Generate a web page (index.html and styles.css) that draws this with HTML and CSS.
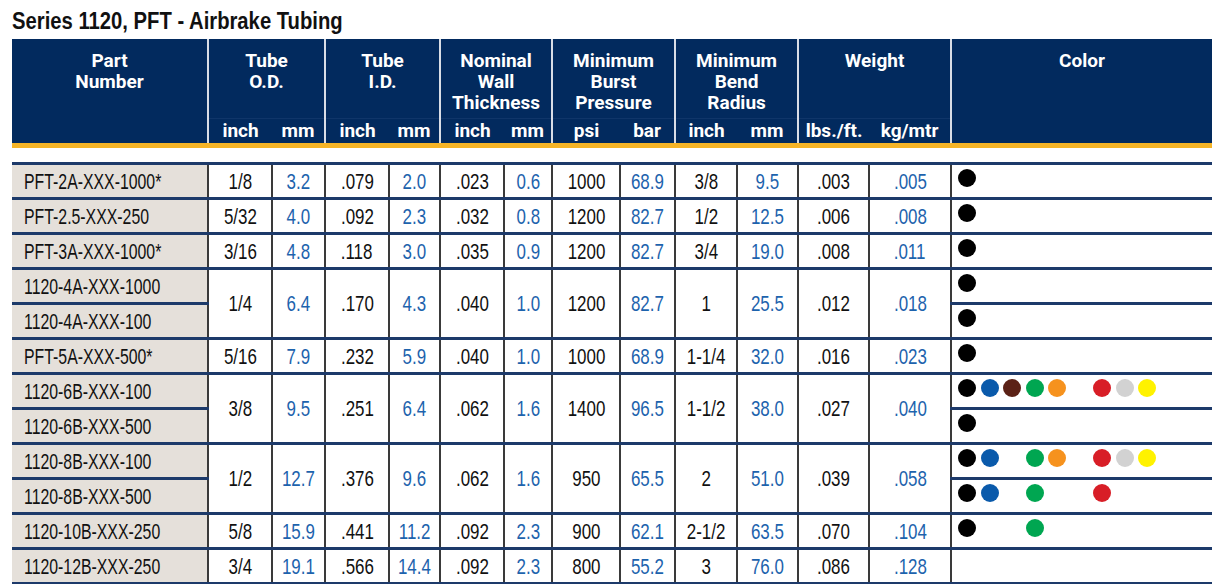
FILE: index.html
```html
<!DOCTYPE html>
<html lang="en">
<head>
<meta charset="utf-8">
<title>Series 1120, PFT - Airbrake Tubing</title>
<link rel="stylesheet" href="styles.css">
</head>
<body>
<h1 class="title"><span class="t">Series 1120, PFT - Airbrake Tubing</span></h1>
<table class="spec">
  <colgroup>
    <col style="width:196px"><col style="width:64px"><col style="width:53px"><col style="width:64px"><col style="width:51px"><col style="width:64px"><col style="width:48px"><col style="width:68px"><col style="width:55px"><col style="width:62px"><col style="width:61px"><col style="width:71px"><col style="width:82px"><col style="width:261px">
  </colgroup>
  <thead>
    <tr class="h1">
      <th rowspan="2" class="first">Part<br>Number</th>
      <th colspan="2" class="g">Tube<br>O.D.</th>
      <th colspan="2" class="g">Tube<br>I.D.</th>
      <th colspan="2" class="g">Nominal<br>Wall<br>Thickness</th>
      <th colspan="2" class="g">Minimum<br>Burst<br>Pressure</th>
      <th colspan="2" class="g">Minimum<br>Bend<br>Radius</th>
      <th colspan="2" class="g">Weight</th>
      <th rowspan="2" class="g">Color</th>
    </tr>
    <tr class="h2">
      <th class="g">inch</th><th>mm</th>
      <th class="g">inch</th><th>mm</th>
      <th class="g">inch</th><th>mm</th>
      <th class="g">psi</th><th>bar</th>
      <th class="g">inch</th><th>mm</th>
      <th class="g">lbs./ft.</th><th>kg/mtr</th>
    </tr>
  </thead>
  <tbody>
    <tr class="spacer"><td colspan="14"></td></tr>
    <tr>
      <td class="pn"><span class="t">PFT-2A-XXX-1000*</span></td><td><span class="t">1/8</span></td><td class="m"><span class="t">3.2</span></td><td><span class="t">.079</span></td><td class="m"><span class="t">2.0</span></td><td><span class="t">.023</span></td><td class="m"><span class="t">0.6</span></td><td><span class="t">1000</span></td><td class="m"><span class="t">68.9</span></td><td><span class="t">3/8</span></td><td class="m"><span class="t">9.5</span></td><td><span class="t">.003</span></td><td class="m"><span class="t">.005</span></td>
      <td class="clr"><div class="dots"><span class="dot k"></span></div></td>
    </tr>
    <tr>
      <td class="pn"><span class="t">PFT-2.5-XXX-250</span></td><td><span class="t">5/32</span></td><td class="m"><span class="t">4.0</span></td><td><span class="t">.092</span></td><td class="m"><span class="t">2.3</span></td><td><span class="t">.032</span></td><td class="m"><span class="t">0.8</span></td><td><span class="t">1200</span></td><td class="m"><span class="t">82.7</span></td><td><span class="t">1/2</span></td><td class="m"><span class="t">12.5</span></td><td><span class="t">.006</span></td><td class="m"><span class="t">.008</span></td>
      <td class="clr"><div class="dots"><span class="dot k"></span></div></td>
    </tr>
    <tr>
      <td class="pn"><span class="t">PFT-3A-XXX-1000*</span></td><td><span class="t">3/16</span></td><td class="m"><span class="t">4.8</span></td><td><span class="t">.118</span></td><td class="m"><span class="t">3.0</span></td><td><span class="t">.035</span></td><td class="m"><span class="t">0.9</span></td><td><span class="t">1200</span></td><td class="m"><span class="t">82.7</span></td><td><span class="t">3/4</span></td><td class="m"><span class="t">19.0</span></td><td><span class="t">.008</span></td><td class="m"><span class="t">.011</span></td>
      <td class="clr"><div class="dots"><span class="dot k"></span></div></td>
    </tr>
    <tr>
      <td class="pn"><span class="t">1120-4A-XXX-1000</span></td><td rowspan="2"><span class="t">1/4</span></td><td rowspan="2" class="m"><span class="t">6.4</span></td><td rowspan="2"><span class="t">.170</span></td><td rowspan="2" class="m"><span class="t">4.3</span></td><td rowspan="2"><span class="t">.040</span></td><td rowspan="2" class="m"><span class="t">1.0</span></td><td rowspan="2"><span class="t">1200</span></td><td rowspan="2" class="m"><span class="t">82.7</span></td><td rowspan="2"><span class="t">1</span></td><td rowspan="2" class="m"><span class="t">25.5</span></td><td rowspan="2"><span class="t">.012</span></td><td rowspan="2" class="m"><span class="t">.018</span></td>
      <td class="clr"><div class="dots"><span class="dot k"></span></div></td>
    </tr>
    <tr>
      <td class="pn"><span class="t">1120-4A-XXX-100</span></td>
      <td class="clr"><div class="dots"><span class="dot k"></span></div></td>
    </tr>
    <tr>
      <td class="pn"><span class="t">PFT-5A-XXX-500*</span></td><td><span class="t">5/16</span></td><td class="m"><span class="t">7.9</span></td><td><span class="t">.232</span></td><td class="m"><span class="t">5.9</span></td><td><span class="t">.040</span></td><td class="m"><span class="t">1.0</span></td><td><span class="t">1000</span></td><td class="m"><span class="t">68.9</span></td><td><span class="t">1-1/4</span></td><td class="m"><span class="t">32.0</span></td><td><span class="t">.016</span></td><td class="m"><span class="t">.023</span></td>
      <td class="clr"><div class="dots"><span class="dot k"></span></div></td>
    </tr>
    <tr>
      <td class="pn"><span class="t">1120-6B-XXX-100</span></td><td rowspan="2"><span class="t">3/8</span></td><td rowspan="2" class="m"><span class="t">9.5</span></td><td rowspan="2"><span class="t">.251</span></td><td rowspan="2" class="m"><span class="t">6.4</span></td><td rowspan="2"><span class="t">.062</span></td><td rowspan="2" class="m"><span class="t">1.6</span></td><td rowspan="2"><span class="t">1400</span></td><td rowspan="2" class="m"><span class="t">96.5</span></td><td rowspan="2"><span class="t">1-1/2</span></td><td rowspan="2" class="m"><span class="t">38.0</span></td><td rowspan="2"><span class="t">.027</span></td><td rowspan="2" class="m"><span class="t">.040</span></td>
      <td class="clr"><div class="dots"><span class="dot k"></span><span class="dot b"></span><span class="dot br"></span><span class="dot g"></span><span class="dot o"></span><span class="dot"></span><span class="dot r"></span><span class="dot gy"></span><span class="dot y"></span></div></td>
    </tr>
    <tr>
      <td class="pn"><span class="t">1120-6B-XXX-500</span></td>
      <td class="clr"><div class="dots"><span class="dot k"></span></div></td>
    </tr>
    <tr>
      <td class="pn"><span class="t">1120-8B-XXX-100</span></td><td rowspan="2"><span class="t">1/2</span></td><td rowspan="2" class="m"><span class="t">12.7</span></td><td rowspan="2"><span class="t">.376</span></td><td rowspan="2" class="m"><span class="t">9.6</span></td><td rowspan="2"><span class="t">.062</span></td><td rowspan="2" class="m"><span class="t">1.6</span></td><td rowspan="2"><span class="t">950</span></td><td rowspan="2" class="m"><span class="t">65.5</span></td><td rowspan="2"><span class="t">2</span></td><td rowspan="2" class="m"><span class="t">51.0</span></td><td rowspan="2"><span class="t">.039</span></td><td rowspan="2" class="m"><span class="t">.058</span></td>
      <td class="clr"><div class="dots"><span class="dot k"></span><span class="dot b"></span><span class="dot"></span><span class="dot g"></span><span class="dot o"></span><span class="dot"></span><span class="dot r"></span><span class="dot gy"></span><span class="dot y"></span></div></td>
    </tr>
    <tr>
      <td class="pn"><span class="t">1120-8B-XXX-500</span></td>
      <td class="clr"><div class="dots"><span class="dot k"></span><span class="dot b"></span><span class="dot"></span><span class="dot g"></span><span class="dot"></span><span class="dot"></span><span class="dot r"></span></div></td>
    </tr>
    <tr>
      <td class="pn"><span class="t">1120-10B-XXX-250</span></td><td><span class="t">5/8</span></td><td class="m"><span class="t">15.9</span></td><td><span class="t">.441</span></td><td class="m"><span class="t">11.2</span></td><td><span class="t">.092</span></td><td class="m"><span class="t">2.3</span></td><td><span class="t">900</span></td><td class="m"><span class="t">62.1</span></td><td><span class="t">2-1/2</span></td><td class="m"><span class="t">63.5</span></td><td><span class="t">.070</span></td><td class="m"><span class="t">.104</span></td>
      <td class="clr"><div class="dots"><span class="dot k"></span><span class="dot"></span><span class="dot"></span><span class="dot g"></span></div></td>
    </tr>
    <tr>
      <td class="pn"><span class="t">1120-12B-XXX-250</span></td><td><span class="t">3/4</span></td><td class="m"><span class="t">19.1</span></td><td><span class="t">.566</span></td><td class="m"><span class="t">14.4</span></td><td><span class="t">.092</span></td><td class="m"><span class="t">2.3</span></td><td><span class="t">800</span></td><td class="m"><span class="t">55.2</span></td><td><span class="t">3</span></td><td class="m"><span class="t">76.0</span></td><td><span class="t">.086</span></td><td class="m"><span class="t">.128</span></td>
      <td class="clr"><div class="dots"></div></td>
    </tr>
  </tbody>
</table>
</body>
</html>
```
FILE: styles.css
```css
html, body {
  margin: 0;
  padding: 0;
  background: #ffffff;
}

body {
  padding: 0 7px 0 12px;
  font-family: "Liberation Sans", Arial, sans-serif;
  color: #111111;
}

.title {
  margin: 0;
  padding-top: 5px;
  height: 34px;
  line-height: 33px;
  font-family: "Liberation Sans", Arial, sans-serif;
  font-weight: 700;
  font-size: 23px;
  color: #111111;
  white-space: nowrap;
}

.title .t {
  display: inline-block;
  transform: scaleX(0.88);
  transform-origin: left center;
}

.spec {
  width: 1200px;
  table-layout: fixed;
  border-collapse: collapse;
  border-spacing: 0;
}

.spec th {
  background: #022a5e;
  color: #ffffff;
  font-family: Roboto, "Liberation Sans", sans-serif;
  font-weight: 700;
  font-size: 19px;
  line-height: 21px;
  padding: 0;
  text-align: center;
}

.spec th.g {
  border-left: 2px solid #d9dde6;
}

.spec .h1 th {
  height: 79px;
  vertical-align: top;
  padding-top: 11px;
  box-sizing: border-box;
}

.spec .h2 th {
  height: 24px;
  vertical-align: middle;
  border-top: 1px solid #0f3569;
  border-bottom: 5px solid #f5b427;
}

.spec .h1 th[rowspan] {
  border-bottom: 5px solid #f5b427;
}

.spec tbody tr {
  height: 35px;
}

.spec tbody tr.spacer {
  height: 14px;
}

.spec .spacer td {
  height: 14px;
  padding: 0;
  border: none;
  background: #ffffff;
}

.spec td {
  padding: 0;
  font-size: 22px;
  line-height: 24px;
  text-align: center;
  vertical-align: middle;
  border-top: 3px solid #1d3a6a;
  border-bottom: 3px solid #1d3a6a;
  border-left: 2px solid #3a3a3a;
  border-right: 2px solid #3a3a3a;
  color: #111111;
  white-space: nowrap;
}

.spec td .t {
  display: inline-block;
  transform: scaleX(0.77);
  transform-origin: center center;
  padding-top: 2px;
}

.spec td.m {
  color: #1d63ad;
}

.spec td.pn {
  background: #e5e0da;
  text-align: left;
  padding-left: 12px;
  border-left: none;
}

.spec td.pn .t {
  transform: scaleX(0.72);
  transform-origin: left center;
}

.spec td.clr {
  vertical-align: top;
  padding: 4px 0 0 6px;
  border-right: none;
}

.dots {
  display: flex;
  gap: 4.5px;
  height: 18px;
}

.dot {
  width: 18px;
  height: 18px;
  border-radius: 50%;
  flex: none;
}

.dot.k { background: #000000; }
.dot.b { background: #0a5aab; }
.dot.br { background: #5b2116; }
.dot.g { background: #00a651; }
.dot.o { background: #f6921e; }
.dot.r { background: #d81e27; }
.dot.gy { background: #d2d2d2; }
.dot.y { background: #fff200; }
```
